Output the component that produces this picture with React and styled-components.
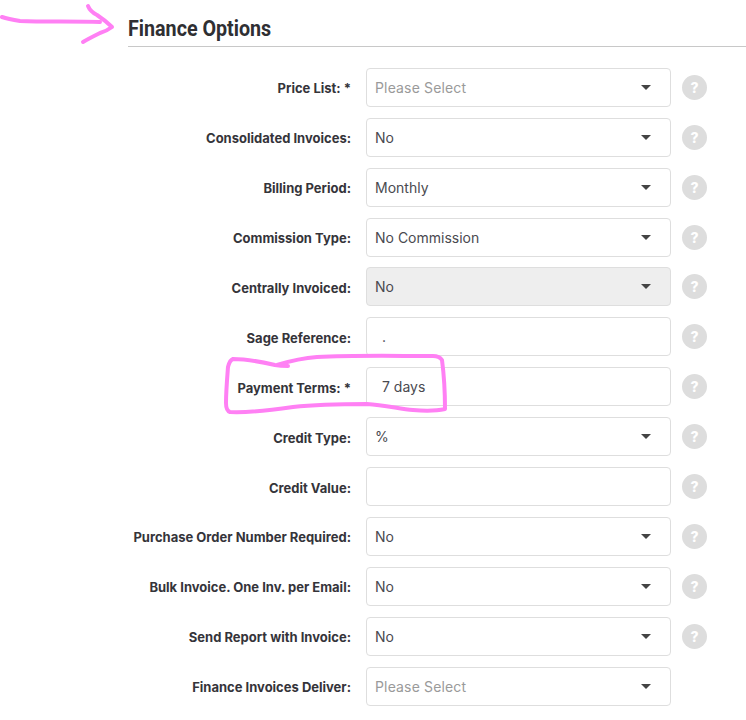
import styled, { createGlobalStyle } from "styled-components";

const rows = [
  { label: "Price List: *", value: "Please Select", select: true, placeholder: true },
  { label: "Consolidated Invoices:", value: "No", select: true },
  { label: "Billing Period:", value: "Monthly", select: true },
  { label: "Commission Type:", value: "No Commission", select: true },
  { label: "Centrally Invoiced:", value: "No", select: true, disabled: true },
  { label: "Sage Reference:", value: ".", },
  { label: "Payment Terms: *", value: "7 days" },
  { label: "Credit Type:", value: "%", select: true },
  { label: "Credit Value:", value: "" },
  { label: "Purchase Order Number Required:", value: "No", select: true },
  { label: "Bulk Invoice. One Inv. per Email:", value: "No", select: true },
  { label: "Send Report with Invoice:", value: "No", select: true },
  { label: "Finance Invoices Deliver:", value: "Please Select", select: true, placeholder: true, noHelp: true },
];

export default function App() {
  return (
    <Page>
      <GlobalStyle />
      <Heading>
        <HeadingText>Finance Options</HeadingText>
      </Heading>
      <Form>
        {rows.map((row) => (
          <Row key={row.label}>
            <Label>{row.label}</Label>
            <Field $disabled={row.disabled} $select={row.select}>
              <Value $placeholder={row.placeholder}>{row.value}</Value>
              {row.select && <Caret />}
            </Field>
            {!row.noHelp && <Help>?</Help>}
          </Row>
        ))}
      </Form>
      <Scribble viewBox="0 0 746 720" aria-hidden="true">
        <path d="M2 17 C8 19 14 20 20 21 C45 22 75 21 100 22" />
        <path d="M88 6 C90 11 93 13 97 15 C103 19 108 23 112 27 C108 30 104 32 100 33 C94 36 88 39 83 42" />
        <path d="M288 366 C284 366 280 366 275 365 C262 362 246 359 233 359 C230 360 229 363 228 367 C227 380 226 392 226 403 C226 408 227 411 230 412 C250 413 272 410 293 407 C320 404 345 404 367 404 C385 405 400 409 413 410 C425 411 436 411 445 409 C445 392 444 375 442 360 C440 357 437 356 433 356 C395 356 355 355 317 357 C302 358 290 361 277 365" />
      </Scribble>
    </Page>
  );
}

const GlobalStyle = createGlobalStyle`
  html, body {
    margin: 0;
    padding: 0;
    background: #fff;
  }
`;

const Page = styled.div`
  position: relative;
  width: 746px;
  height: 720px;
  overflow: hidden;
  padding: 14px 0 0 128px;
  box-sizing: border-box;
  font-family: "Inter", "Liberation Sans", sans-serif;
`;

const Heading = styled.div`
  height: 32px;
  border-bottom: 1px solid #c8c8c8;
`;

const HeadingText = styled.h2`
  margin: 0;
  font-family: "Roboto", "Liberation Sans", sans-serif;
  font-size: 22px;
  font-weight: 700;
  line-height: 30px;
  color: #2f2f33;
  transform: scaleX(0.895);
  transform-origin: left center;
  white-space: nowrap;
`;

const Form = styled.div`
  display: flex;
  flex-direction: column;
  gap: 10.91px;
  padding-top: 20.82px;
`;

const Row = styled.div`
  display: flex;
  align-items: center;
  height: 39px;
  margin-left: -128px;
`;

const Label = styled.div`
  width: 351px;
  flex: none;
  padding-top: 2px;
  text-align: right;
  font-size: 13px;
  font-weight: 700;
  color: #35343a;
  white-space: nowrap;
`;

const Field = styled.div`
  width: 305px;
  height: 39px;
  flex: none;
  margin-left: 15px;
  box-sizing: border-box;
  position: relative;
  display: flex;
  align-items: center;
  padding-left: ${(p) => (p.$select ? "8px" : "15px")};
  border: 1px solid #dedede;
  border-radius: 4px;
  background: ${(p) => (p.$disabled ? "#eeeeee" : "#fff")};
`;

const Value = styled.span`
  font-size: 14px;
  letter-spacing: ${(p) => (p.$placeholder ? "0.15px" : "0")};
  color: ${(p) => (p.$placeholder ? "#9a9a9a" : "#4a4a50")};
`;

const Caret = styled.span`
  position: absolute;
  right: 19px;
  top: 16px;
  width: 0;
  height: 0;
  border-left: 5px solid transparent;
  border-right: 5px solid transparent;
  border-top: 5px solid #444;
`;

const Help = styled.div`
  width: 25px;
  height: 25px;
  flex: none;
  margin-left: 11px;
  border-radius: 50%;
  background: #dddddd;
  color: #fff;
  font-size: 14px;
  font-weight: 800;
  line-height: 25px;
  text-align: center;
`;

const Scribble = styled.svg`
  position: absolute;
  left: 0;
  top: 0;
  width: 746px;
  height: 720px;
  pointer-events: none;

  path {
    fill: none;
    stroke: #ff80f4;
    stroke-width: 4;
    stroke-linecap: round;
    stroke-linejoin: round;
  }
`;
